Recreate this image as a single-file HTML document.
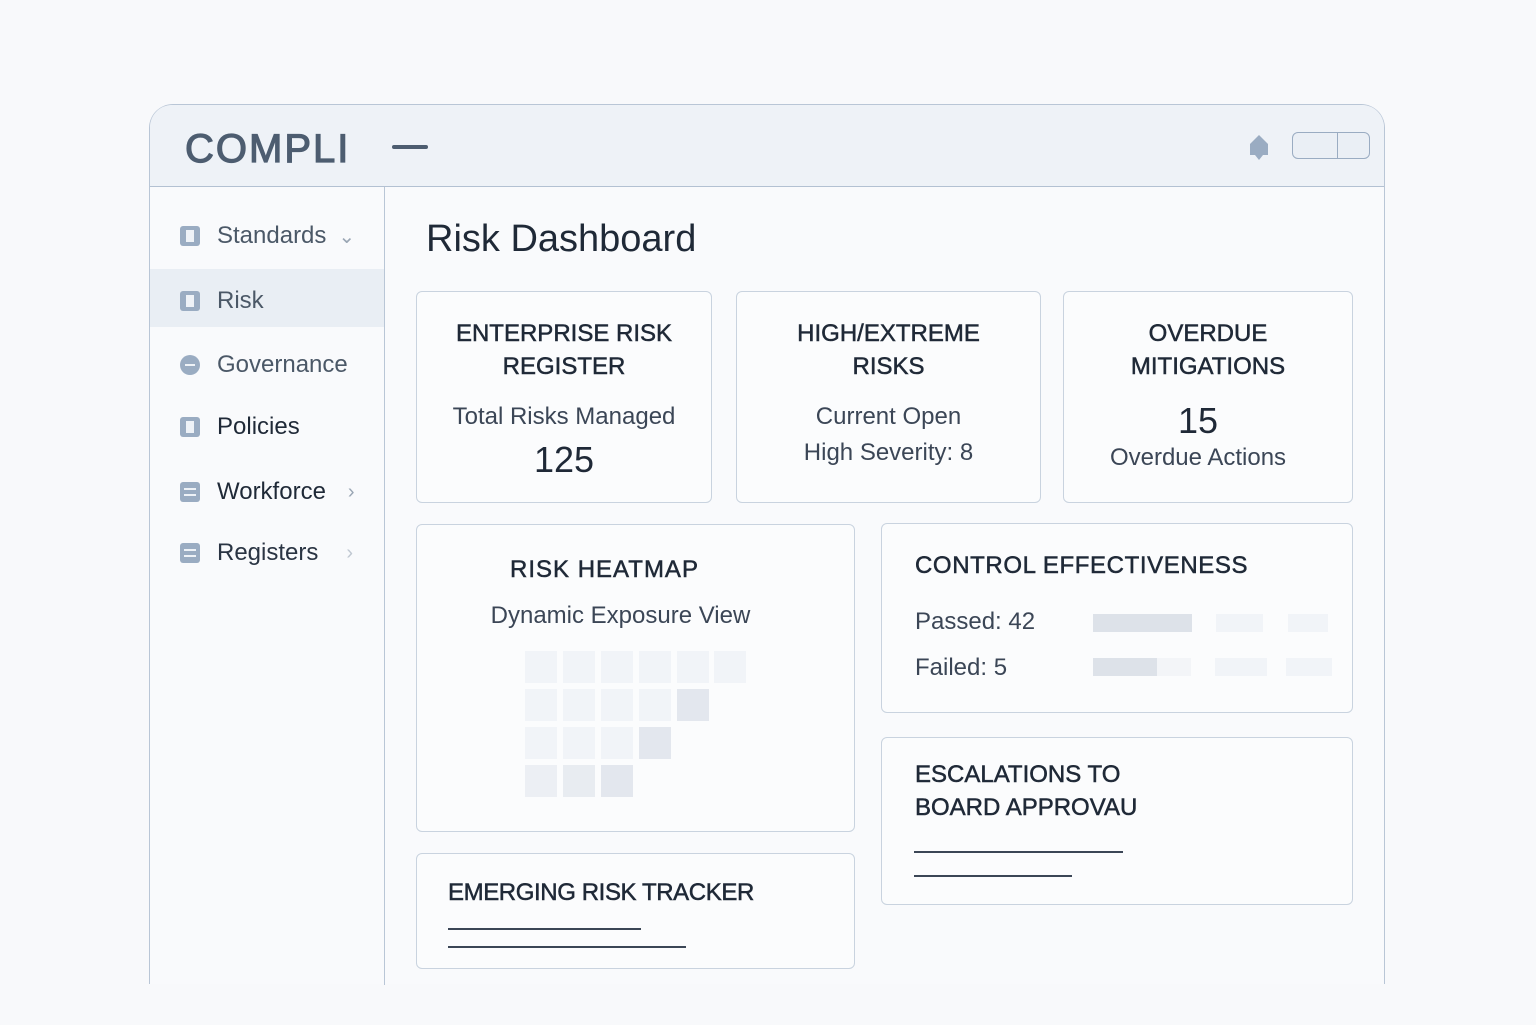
<!DOCTYPE html>
<html><head><meta charset="utf-8"><style>
*{box-sizing:border-box;margin:0;padding:0}
body{width:1536px;height:1024px;background:#f8f9fb;font-family:"Liberation Sans",sans-serif;color:#2a3443;position:relative;overflow:hidden}
.win{position:absolute;left:149px;top:104px;width:1236px;height:880px;border:1.5px solid #b9c6d6;border-bottom:none;border-radius:24px 24px 0 0;background:#f9fafc}
.hdr{position:absolute;left:0;top:0;right:0;height:82px;background:#eef2f7;border-bottom:1.5px solid #b3c1d2;border-radius:22px 22px 0 0}
.logo{position:absolute;left:35px;top:22px;font-size:40px;color:#4d5d70;letter-spacing:2px;-webkit-text-stroke:1.2px #4d5d70}
.dash{position:absolute;left:242px;top:40px;width:36px;height:4px;background:#4d5d70;border-radius:2px}
.tog{position:absolute;left:1142px;top:27px;width:78px;height:27px;border:1.5px solid #9aacc2;border-radius:6px;background:#eaeff5}
.tog:after{content:"";position:absolute;left:44px;top:0;bottom:0;border-left:1.5px solid #9aacc2}
.side{position:absolute;left:0;top:82px;width:235px;height:800px;border-right:1.5px solid #b9c6d6}
.it{position:absolute;left:30px;font-size:24px;color:#4b5867;display:flex;align-items:center}
.ic{width:20px;height:20px;background:#9aacc2;border-radius:3px;margin-right:17px;position:relative}
.ic.b:after{content:"";position:absolute;left:6px;top:4px;width:8px;height:12px;background:#eef2f7}
.ic.l:after{content:"";position:absolute;left:4px;top:6px;width:12px;height:2px;background:#eef2f7;box-shadow:0 6px 0 #eef2f7}
.ic.c{border-radius:50%}
.ic.c:after{content:"";position:absolute;left:5px;top:9px;width:10px;height:2px;background:#eef2f7}
.chev{margin-left:12px;color:#9aa6b4;font-size:20px}
.card{position:absolute;border:1.5px solid #c9d3df;border-radius:6px;background:#fbfcfd;text-align:center}
.t{font-size:24px;color:#1f2937;line-height:33px;-webkit-text-stroke:0.5px #1f2937}
.s{font-size:24px;color:#3b4656;line-height:36px}
.n{font-size:36px;color:#1f2937}
.cell{position:absolute;width:32px;height:32px;background:#f1f4f8}
.bar{position:absolute;height:18px;background:#f1f4f8}
.ln{position:absolute;height:1.5px;background:#3b4656}
</style></head><body>
<div class="win">
<div class="hdr"><div class="logo">COMPLI</div><div class="dash"></div>
<svg style="position:absolute;left:1095px;top:28px" width="28" height="30" viewBox="0 0 28 30"><path d="M14 2 L5 11 V22 H23 V11 Z M10 22 L14 27 L18 22" fill="#9aacc2"/></svg>
<div class="tog"></div></div>
<div class="side">
<div style="position:absolute;left:0;top:82px;width:234px;height:58px;background:#e9eef4"></div>
<div class="it" style="top:35px"><span class="ic b"></span>Standards<span class="chev">⌄</span></div>
<div class="it" style="top:100px"><span class="ic b"></span>Risk</div>
<div class="it" style="top:164px"><span class="ic c"></span>Governance</div>
<div class="it" style="top:226px;color:#1f2937"><span class="ic b"></span>Policies</div>
<div class="it" style="top:291px;color:#1f2937"><span class="ic l"></span>Workforce<span class="chev" style="margin-left:22px">›</span></div>
<div class="it" style="top:352px;color:#2a3443"><span class="ic l"></span>Registers<span class="chev" style="color:#c0c8d2;margin-left:28px">›</span></div>
</div>
</div>
<div style="position:absolute;left:426px;top:218px;font-size:38px;color:#1f2937">Risk Dashboard</div>

<div class="card" style="left:416px;top:291px;width:296px;height:212px;padding-top:25px"><div class="t">ENTERPRISE RISK<br>REGISTER</div><div class="s" style="margin-top:16px">Total Risks Managed</div><div class="n" style="margin-top:4px;margin-right:0">125</div></div>
<div class="card" style="left:736px;top:291px;width:305px;height:212px;padding-top:25px"><div class="t">HIGH/EXTREME<br>RISKS</div><div class="s" style="margin-top:16px">Current Open<br>High Severity: 8</div></div>
<div class="card" style="left:1063px;top:291px;width:290px;height:212px;padding-top:25px"><div class="t">OVERDUE<br>MITIGATIONS</div><div class="n" style="margin-top:18px;line-height:40px;margin-right:20px">15</div><div class="s" style="line-height:34px;margin-right:20px">Overdue Actions</div></div>

<div class="card" style="left:416px;top:524px;width:439px;height:308px;padding-top:28px"><div class="t" style="margin-left:-62px;letter-spacing:1px">RISK HEATMAP</div><div class="s" style="margin-top:12px;margin-left:-30px">Dynamic Exposure View</div></div>
<div class="cell" style="left:525px;top:651px"></div><div class="cell" style="left:563px;top:651px"></div><div class="cell" style="left:601px;top:651px"></div><div class="cell" style="left:639px;top:651px"></div><div class="cell" style="left:677px;top:651px"></div><div class="cell" style="left:714px;top:651px"></div>
<div class="cell" style="left:525px;top:689px"></div><div class="cell" style="left:563px;top:689px"></div><div class="cell" style="left:601px;top:689px"></div><div class="cell" style="left:639px;top:689px"></div><div class="cell" style="left:677px;top:689px;background:#e3e7ee"></div>
<div class="cell" style="left:525px;top:727px"></div><div class="cell" style="left:563px;top:727px"></div><div class="cell" style="left:601px;top:727px"></div><div class="cell" style="left:639px;top:727px;background:#e3e7ee"></div>
<div class="cell" style="left:525px;top:765px;background:#eceff4"></div><div class="cell" style="left:563px;top:765px;background:#e8ecf1"></div><div class="cell" style="left:601px;top:765px;background:#e3e7ee"></div>

<div class="card" style="left:881px;top:523px;width:472px;height:190px;text-align:left;padding:25px 0 0 33px"><div class="t" style="letter-spacing:0.6px">CONTROL EFFECTIVENESS</div><div class="s" style="margin-top:22px">Passed: 42</div><div class="s" style="margin-top:10px">Failed: 5</div></div>
<div class="bar" style="left:1093px;top:614px;width:99px;background:#dde2e9"></div><div class="bar" style="left:1216px;top:614px;width:47px"></div><div class="bar" style="left:1288px;top:614px;width:40px"></div>
<div class="bar" style="left:1093px;top:658px;width:64px;background:#dde2e9"></div><div class="bar" style="left:1157px;top:658px;width:34px;background:#f3f5f8"></div><div class="bar" style="left:1215px;top:658px;width:52px"></div><div class="bar" style="left:1286px;top:658px;width:46px"></div>

<div class="card" style="left:881px;top:737px;width:472px;height:168px;text-align:left;padding:20px 0 0 33px"><div class="t">ESCALATIONS TO<br>BOARD APPROVAU</div></div>
<div class="ln" style="left:914px;top:851px;width:209px"></div><div class="ln" style="left:914px;top:875px;width:158px"></div>

<div class="card" style="left:416px;top:853px;width:439px;height:116px;text-align:left;padding:22px 0 0 31px"><div class="t" style="letter-spacing:-0.4px">EMERGING RISK TRACKER</div></div>
<div class="ln" style="left:448px;top:928px;width:193px"></div><div class="ln" style="left:448px;top:946px;width:238px"></div>
<div style="position:absolute;left:0;top:985px;width:1536px;height:40px;background:#f8f9fb"></div>
</body></html>
